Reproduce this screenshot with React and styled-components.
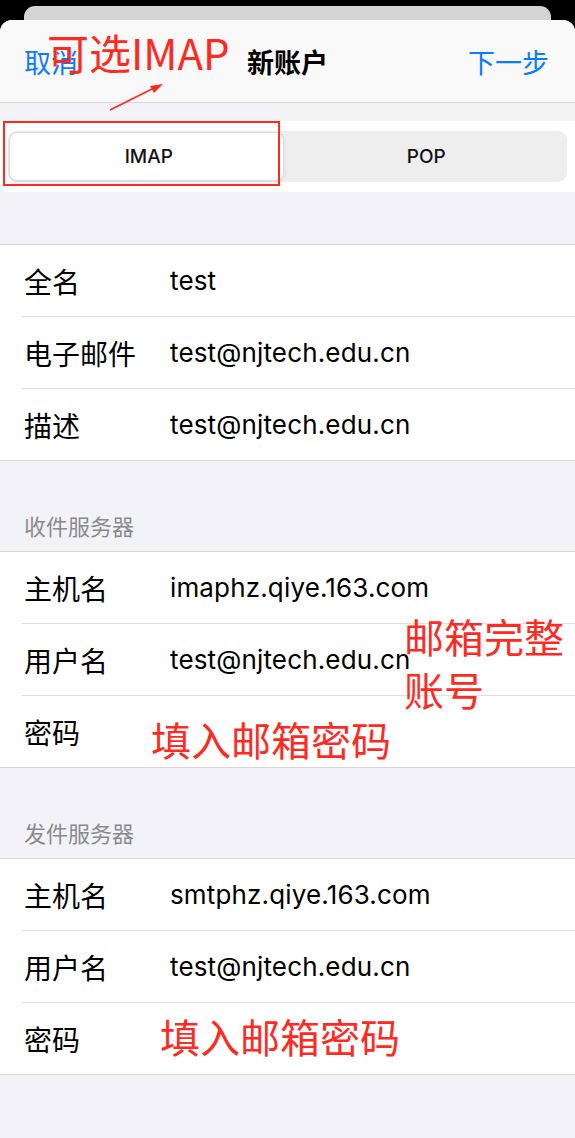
import React from 'react';
import styled, { createGlobalStyle } from 'styled-components';

const GlobalStyle = createGlobalStyle`
    html, body {
        margin: 0;
        padding: 0;
        background: #000;
    }
    body {
        font-family: Inter, "Noto Sans CJK SC", sans-serif;
        -webkit-font-smoothing: antialiased;
    }
`;

const RED = '#ff2a1f';
const BLUE = '#0a7aff';

const Page = styled.div`
    width: 575px;
    min-height: 1138px;
    padding-top: 6px;
    box-sizing: border-box;
    background: #000;
    display: flex;
    flex-direction: column;
`;

// 뒤에 겹쳐 보이는 카드
const BackCard = styled.div`
    height: 14px;
    margin: 0 24px;
    background: #d4d3d8;
    border-radius: 11px 11px 0 0;
`;

const Sheet = styled.div`
    flex: 1;
    background: #f2f2f7;
    border-radius: 12px 12px 0 0;
    display: flex;
    flex-direction: column;
`;

const NavBar = styled.div`
    position: relative;
    height: 82px;
    padding: 0 26px 0 24px;
    background: #f9f9f9;
    border-radius: 12px 12px 0 0;
    border-bottom: 1px solid #d6d6d9;
    display: grid;
    grid-template-columns: 1fr auto 1fr;
    align-items: center;
`;

const NavButton = styled.div`
    font-size: 27px;
    color: ${BLUE};
    justify-self: ${p => (p.$right ? 'end' : 'start')};
`;

const NavTitle = styled.div`
    font-size: 27px;
    font-weight: 600;
    color: #000;
    padding-left: 2px;
`;

// 빨간 주석 글씨
const Note = styled.div`
    position: absolute;
    color: ${RED};
    font-family: "Noto Sans CJK SC", sans-serif;
    font-weight: 400;
    font-size: ${p => p.$size || 40}px;
    line-height: ${p => p.$lh || 1.2};
    white-space: nowrap;
    pointer-events: none;
`;

const Arrow = styled.svg`
    position: absolute;
    left: 104px;
    top: 60px;
    overflow: visible;
`;

const Spacer = styled.div`
    height: ${p => p.$h}px;
`;

const SegmentBand = styled.div`
    position: relative;
    background: #fff;
    height: 71px;
    padding: 10px 8px;
    box-sizing: border-box;
`;

const Segmented = styled.div`
    height: 51px;
    background: #eeeeef;
    border-radius: 9px;
    padding: 2px;
    box-sizing: border-box;
    display: grid;
    grid-template-columns: 1fr 1fr;
`;

const Segment = styled.div`
    display: flex;
    align-items: center;
    justify-content: center;
    font-size: 19px;
    font-weight: 500;
    color: #111;
    border-radius: 7px;
    margin-right: ${p => (p.$active ? '5px' : '0')};
    padding-left: ${p => (p.$active ? '5px' : '0')};
    background: ${p => (p.$active ? '#fff' : 'transparent')};
    box-shadow: ${p => (p.$active ? '0 0 0 1px #dcdcdc, 0 2px 5px rgba(0,0,0,0.12)' : 'none')};
`;

const RedBox = styled.div`
    position: absolute;
    left: 3px;
    top: 0;
    width: 277px;
    height: 65px;
    border: 2px solid ${RED};
    box-sizing: border-box;
`;

const SectionTitle = styled.div`
    height: 90px;
    padding: 0 24px 13px;
    box-sizing: border-box;
    display: flex;
    align-items: flex-end;
    font-size: 22px;
    color: #8a8a8e;
    line-height: 1;
`;

const Group = styled.div`
    position: relative;
    background: #fff;
    border-top: 1px solid #d8d8dc;
    border-bottom: 1px solid #d8d8dc;
`;

const Row = styled.div`
    position: relative;
    height: 71px;
    margin-left: 22px;
    padding-left: 2px;
    display: grid;
    grid-template-columns: 146px 1fr;
    align-items: center;
    & + & {
        border-top: 1px solid #e0e0e3;
    }
`;

const Label = styled.div`
    font-size: 28px;
    color: #000;
`;

const Value = styled.div`
    font-size: 26px;
    color: #000;
    letter-spacing: 0.15px;
`;

const Field = ({ label, value, note }) => (
    <Row>
        <Label>{label}</Label>
        <Value>{value}</Value>
        {note}
    </Row>
);

const App = () => (
    <>
        <GlobalStyle />
        <Page>
            <BackCard />
            <Sheet>
                <NavBar>
                    <NavButton>取消</NavButton>
                    <NavTitle>新账户</NavTitle>
                    <NavButton $right>下一步</NavButton>
                    <Note $size={42} style={{ left: 47, top: 7 }}>可选IMAP</Note>
                    <Arrow width="60" height="30">
                        <line x1="6" y1="30" x2="52" y2="7" stroke={RED} strokeWidth="1.6" />
                        <polygon points="59,4 46,6 50,13" fill={RED} />
                    </Arrow>
                </NavBar>

                <Spacer $h={18} />
                <SegmentBand>
                    <Segmented>
                        <Segment $active>IMAP</Segment>
                        <Segment>POP</Segment>
                    </Segmented>
                    <RedBox />
                </SegmentBand>

                <Spacer $h={52} />
                <Group>
                    <Field label="全名" value="test" />
                    <Field label="电子邮件" value="test@njtech.edu.cn" />
                    <Field label="描述" value="test@njtech.edu.cn" />
                </Group>

                <SectionTitle>收件服务器</SectionTitle>
                <Group>
                    <Field label="主机名" value="imaphz.qiye.163.com" />
                    <Field label="用户名" value="test@njtech.edu.cn" />
                    <Field
                        label="密码"
                        value=""
                        note={<Note $size={40} style={{ left: 129, top: 19 }}>填入邮箱密码</Note>}
                    />
                    <Note $size={40} $lh={1.32} style={{ left: 404, top: 58 }}>
                        邮箱完整
                        <br />
                        账号
                    </Note>
                </Group>

                <SectionTitle>发件服务器</SectionTitle>
                <Group>
                    <Field label="主机名" value="smtphz.qiye.163.com" />
                    <Field label="用户名" value="test@njtech.edu.cn" />
                    <Field
                        label="密码"
                        value=""
                        note={<Note $size={40} style={{ left: 138, top: 9 }}>填入邮箱密码</Note>}
                    />
                </Group>
            </Sheet>
        </Page>
    </>
);

export default App;
